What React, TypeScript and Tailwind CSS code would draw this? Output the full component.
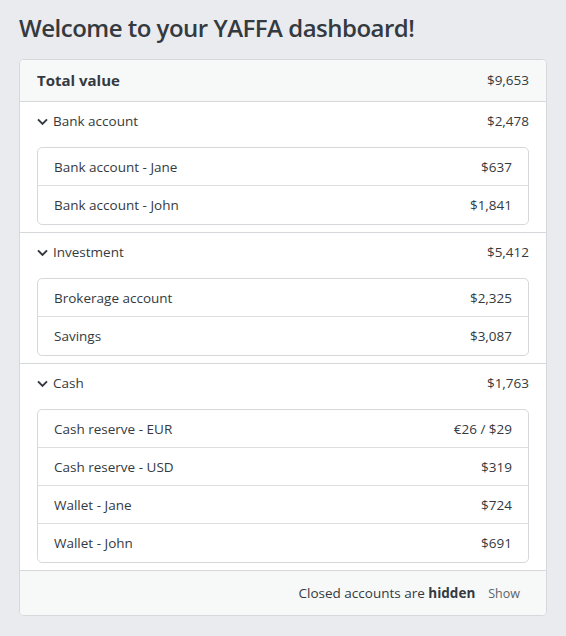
const groups = [
  {
    name: "Bank account",
    total: "$2,478",
    accounts: [
      { name: "Bank account - Jane", value: "$637" },
      { name: "Bank account - John", value: "$1,841" },
    ],
  },
  {
    name: "Investment",
    total: "$5,412",
    accounts: [
      { name: "Brokerage account", value: "$2,325" },
      { name: "Savings", value: "$3,087" },
    ],
  },
  {
    name: "Cash",
    total: "$1,763",
    accounts: [
      { name: "Cash reserve - EUR", value: "€26 / $29" },
      { name: "Cash reserve - USD", value: "$319" },
      { name: "Wallet - Jane", value: "$724" },
      { name: "Wallet - John", value: "$691" },
    ],
  },
]

function Chevron() {
  return (
    <svg width="11" height="8" viewBox="0 0 11 8" className="mr-[5px]" aria-hidden="true">
      <path d="M1 1.4 L5.5 5.9 L10 1.4" fill="none" stroke="#343a40" strokeWidth="2" />
    </svg>
  )
}

export default function App() {
  return (
    <div className="min-h-[636px] bg-[#e9ebee] px-[19px] pt-[10px] font-['Open_Sans',sans-serif] text-[13.5px] text-[#343a40]">
      <h1 className="mb-[13px] text-[24px] font-semibold leading-[36px] tracking-[-0.5px] text-[#343a40]">
        Welcome to your YAFFA dashboard!
      </h1>
      <div className="overflow-hidden rounded-[5px] border border-[#d6d8db] bg-white">
        <div className="flex h-[41px] items-center justify-between bg-[#f7f8f8] px-[17px]">
          <span className="text-[15px] font-bold">Total value</span>
          <span>$9,653</span>
        </div>
        {groups.map((group) => (
          <div key={group.name} className="border-t border-[#d6d8db] px-[17px] pb-[7px]">
            <div className="flex h-[39px] items-center justify-between">
              <span className="flex items-center">
                <Chevron />
                {group.name}
              </span>
              <span>{group.total}</span>
            </div>
            <ul className="mt-[6px] divide-y divide-[#dcdee0] rounded-[5px] border border-[#d6d8db]">
              {group.accounts.map((acc) => (
                <li key={acc.name} className="flex h-[38px] items-center justify-between px-[16px] pt-[1px]">
                  <span>{acc.name}</span>
                  <span>{acc.value}</span>
                </li>
              ))}
            </ul>
          </div>
        ))}
        <div className="flex h-[45px] items-center justify-end border-t border-[#d6d8db] bg-[#f7f8f8] pr-[26px]">
          <span>
            Closed accounts are <span className="font-bold">hidden</span>
          </span>
          <button type="button" className="ml-[13px] mt-[2px] text-[12.5px] text-[#5c636a]">
            Show
          </button>
        </div>
      </div>
    </div>
  )
}
